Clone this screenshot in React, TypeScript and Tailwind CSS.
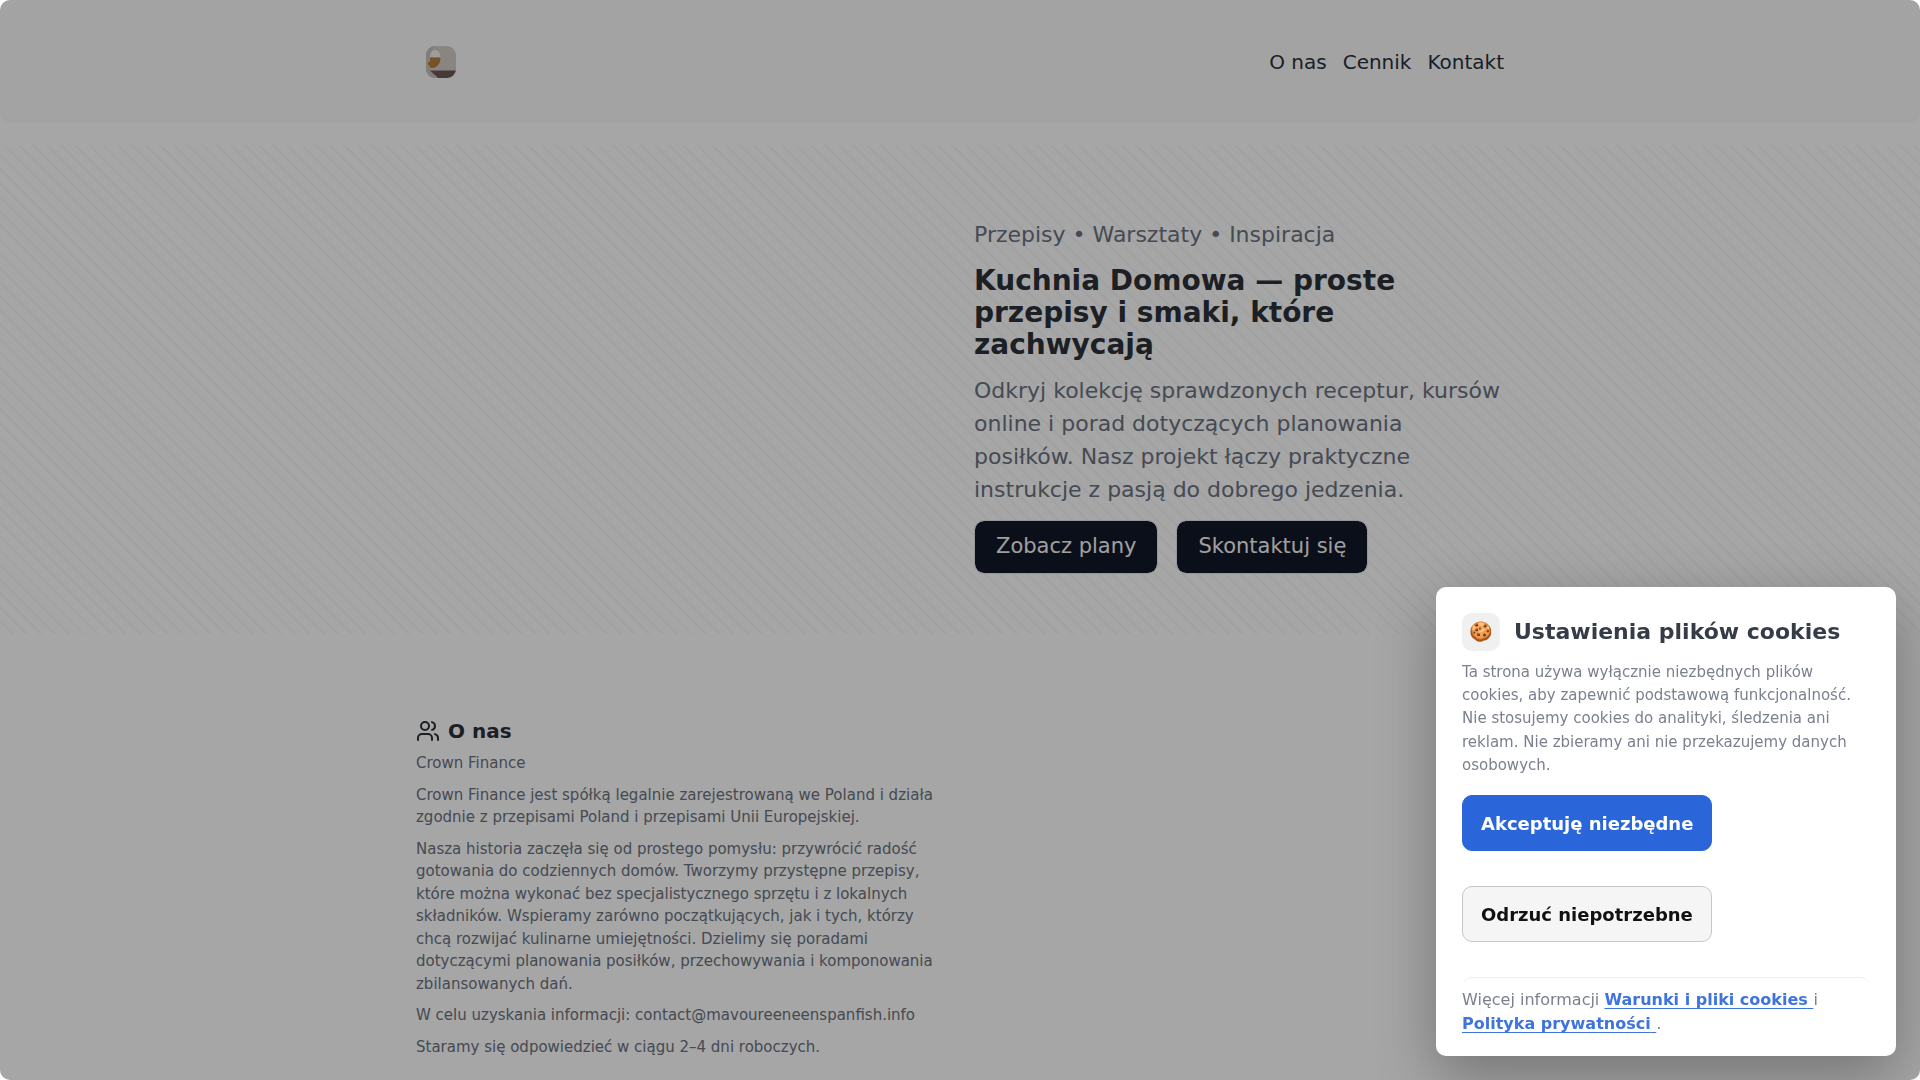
import { useState } from "react";
import { Users } from "lucide-react";

const navLinks = [
  { label: "O nas", href: "#about" },
  { label: "Cennik", href: "#pricing" },
  { label: "Kontakt", href: "#contact" },
];

const aboutParagraphs = [
  "Crown Finance",
  "Crown Finance jest spółką legalnie zarejestrowaną we Poland i działa zgodnie z przepisami Poland i przepisami Unii Europejskiej.",
  "Nasza historia zaczęła się od prostego pomysłu: przywrócić radość gotowania do codziennych domów. Tworzymy przystępne przepisy, które można wykonać bez specjalistycznego sprzętu i z lokalnych składników. Wspieramy zarówno początkujących, jak i tych, którzy chcą rozwijać kulinarne umiejętności. Dzielimy się poradami dotyczącymi planowania posiłków, przechowywania i komponowania zbilansowanych dań.",
  "W celu uzyskania informacji: contact@mavoureeneenspanfish.info",
  "Staramy się odpowiedzieć w ciągu 2–4 dni roboczych.",
];

function Logo() {
  return (
    <svg width="30" height="32" viewBox="0 0 30 32" aria-hidden="true">
      <defs>
        <clipPath id="logo-clip">
          <rect width="30" height="32" rx="9" />
        </clipPath>
      </defs>
      <g clipPath="url(#logo-clip)">
        <rect width="30" height="32" fill="#d3cdc7" />
        <path d="M0 0h9C5 4 3 9 3 14c0 6 2 12 8 18H0z" fill="#c5c1bc" />
        <path d="M4 11.500C4 7 6 4 9 4s5.500 3 5.500 7.500z" fill="#f2f1ef" />
        <path d="M4 11.500h10.500c0 6-3.500 10.500-8.500 10.500-2 0-2.500-1-2.500-2.500C1.500 19 1.500 16 4 15.500z" fill="#b87f38" />
        <path d="M4 24.500h26V32H12z" fill="#6d5855" />
      </g>
    </svg>
  );
}

function CookieDialog({ onClose }: { onClose: () => void }) {
  return (
    <>
      <div className="fixed inset-0 z-40 rounded-[10px] bg-black/35" />
      <div
        role="dialog"
        aria-labelledby="cookie-title"
        className="fixed right-6 bottom-6 z-50 w-[460px] max-w-[calc(100%-48px)] rounded-[10px] bg-white px-[26px] pt-[26px] pb-5 shadow-[0_20px_60px_rgba(0,0,0,0.3)]"
      >
        <div className="flex items-center gap-[14px]">
          <span className="flex size-[38px] shrink-0 items-center justify-center rounded-[10px] bg-[#f0f0f0] text-[19px] leading-none">
            🍪
          </span>
          <h2 id="cookie-title" className="text-[22px] leading-[33px] font-bold text-[#353c47]">
            Ustawienia plików cookies
          </h2>
        </div>
        <p className="mt-[10px] text-[15px] leading-[1.55] text-[#7a808d]">
          Ta strona używa wyłącznie niezbędnych plików cookies, aby zapewnić podstawową funkcjonalność. Nie
          stosujemy cookies do analityki, śledzenia ani reklam. Nie zbieramy ani nie przekazujemy danych osobowych.
        </p>
        <div className="mt-[18px] flex flex-col items-start gap-[35px]">
          <button
            className="h-14 rounded-[10px] border border-[#2a66da] bg-[#2a66da] px-[18px] text-[18px] font-bold text-white"
            onClick={onClose}
          >
            Akceptuję niezbędne
          </button>
          <button
            className="h-14 rounded-[10px] border border-[#c8c8c8] bg-[#f5f5f5] px-[18px] text-[18px] font-bold text-[#111111]"
            onClick={onClose}
          >
            Odrzuć niepotrzebne
          </button>
        </div>
        <div className="mt-[35px] rounded-[10px] border-t border-[#ececec] pt-[10px] text-[16px] leading-6 text-[#7a808d]">
          Więcej informacji{" "}
          <a
            href="#terms"
            className="font-bold text-[#3f74df] underline decoration-1 underline-offset-[3px] [text-decoration-skip-ink:none]"
          >
            Warunki i pliki cookies{" "}
          </a>
          i{" "}
          <a
            href="#privacy"
            className="font-bold text-[#3f74df] underline decoration-1 underline-offset-[3px] [text-decoration-skip-ink:none]"
          >
            Polityka prywatności{" "}
          </a>
          .
        </div>
      </div>
    </>
  );
}

export default function App() {
  const [showCookies, setShowCookies] = useState(true);

  return (
    <div className="h-screen overflow-hidden bg-white font-['DejaVu_Sans',sans-serif]">
      <header className="rounded-[10px] bg-[#fbfbfb]">
        <div className="mx-auto flex h-[123px] max-w-[1120px] items-center justify-between px-4">
          <a href="#" aria-label="Kuchnia Domowa" className="ml-[10px]">
            <Logo />
          </a>
          <nav className="flex gap-4 text-[20px] leading-[30px] text-[#2b303b]">
            {navLinks.map((link) => (
              <a key={link.href} href={link.href}>
                {link.label}
              </a>
            ))}
          </nav>
        </div>
      </header>

      <main>
        <section className="mt-[22px] bg-[repeating-linear-gradient(45deg,transparent_0,transparent_8px,rgba(0,0,0,0.03)_8px,rgba(0,0,0,0.03)_10px)] pt-[73px] pb-[60px]">
          <div className="mx-auto grid max-w-[1120px] grid-cols-2 gap-7 px-4">
            <div />
            <div>
              <p className="text-[22px] leading-[33px] text-[#6b7280]">Przepisy • Warsztaty • Inspiracja</p>
              <h1 className="mt-[14px] text-[28px] leading-8 font-bold text-[#2b3037]">
                Kuchnia Domowa — proste przepisy i smaki, które zachwycają
              </h1>
              <p className="mt-[13px] text-[22px] leading-[33px] text-[#6b7280]">
                Odkryj kolekcję sprawdzonych receptur, kursów online i porad dotyczących planowania posiłków. Nasz
                projekt łączy praktyczne instrukcje z pasją do dobrego jedzenia.
              </p>
              <div className="mt-[14px] flex gap-[18px] text-[21px] text-[#f5f5f5]">
                <button className="h-[54px] rounded-[10px] border border-gray-200 bg-[#111827] bg-clip-padding px-[21px]">
                  Zobacz plany
                </button>
                <button className="h-[54px] rounded-[10px] border border-gray-200 bg-[#111827] bg-clip-padding px-[21px]">
                  Skontaktuj się
                </button>
              </div>
            </div>
          </div>
        </section>

        <section id="about" className="pt-[82px]">
          <div className="mx-auto grid max-w-[1120px] grid-cols-2 gap-7 px-4">
            <div>
              <h2 className="flex items-center gap-2 text-[20px] leading-[30px] font-bold text-[#2b3037]">
                <Users size={24} />
                O nas
              </h2>
              <div className="mt-[6px] flex flex-col gap-[9px] text-[15px] leading-normal text-[#6b7280]">
                {aboutParagraphs.map((text) => (
                  <p key={text}>{text}</p>
                ))}
              </div>
            </div>
          </div>
        </section>
      </main>

      {showCookies && <CookieDialog onClose={() => setShowCookies(false)} />}
    </div>
  );
}
